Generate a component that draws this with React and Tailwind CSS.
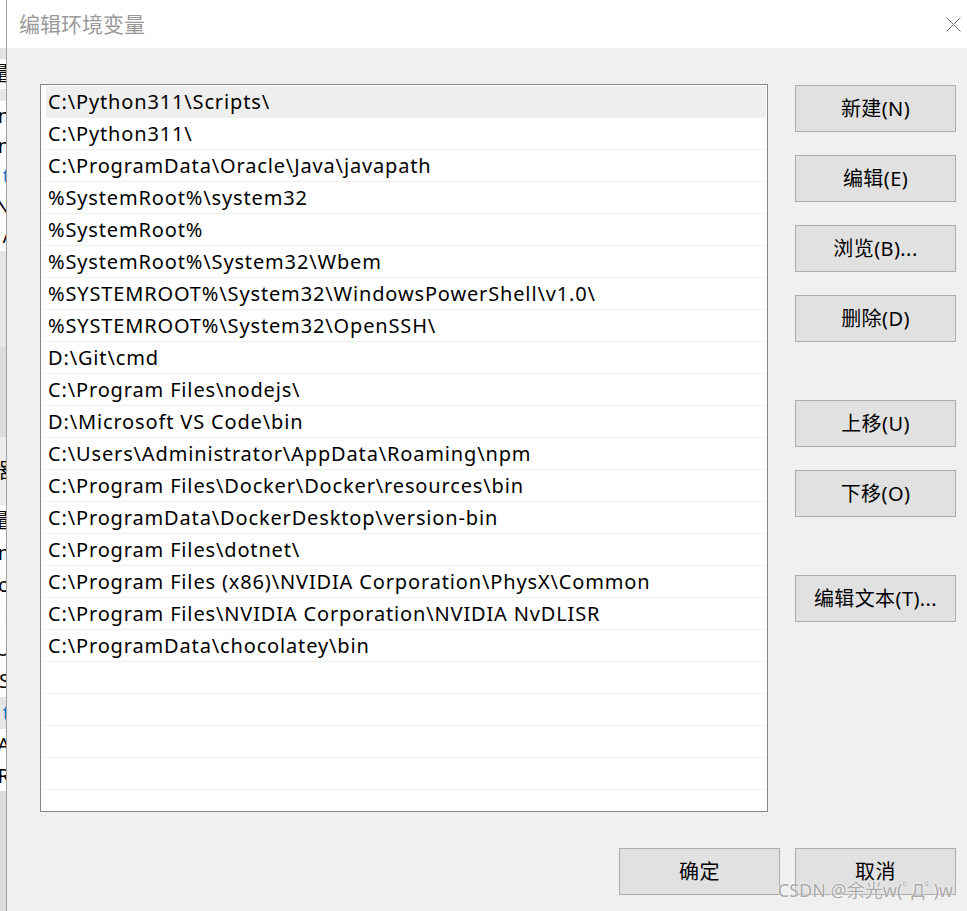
import React from "react";

const paths = [
  "C:\\Python311\\Scripts\\",
  "C:\\Python311\\",
  "C:\\ProgramData\\Oracle\\Java\\javapath",
  "%SystemRoot%\\system32",
  "%SystemRoot%",
  "%SystemRoot%\\System32\\Wbem",
  "%SYSTEMROOT%\\System32\\WindowsPowerShell\\v1.0\\",
  "%SYSTEMROOT%\\System32\\OpenSSH\\",
  "D:\\Git\\cmd",
  "C:\\Program Files\\nodejs\\",
  "D:\\Microsoft VS Code\\bin",
  "C:\\Users\\Administrator\\AppData\\Roaming\\npm",
  "C:\\Program Files\\Docker\\Docker\\resources\\bin",
  "C:\\ProgramData\\DockerDesktop\\version-bin",
  "C:\\Program Files\\dotnet\\",
  "C:\\Program Files (x86)\\NVIDIA Corporation\\PhysX\\Common",
  "C:\\Program Files\\NVIDIA Corporation\\NVIDIA NvDLISR",
  "C:\\ProgramData\\chocolatey\\bin",
];

const rows = [...paths, "", "", "", "", ""];

// sliver of the window that sits behind the dialog
const behind = [
  { h: "h-[48px]", bg: "bg-white", t: "i" },
  { h: "h-[11px]", bg: "bg-[#e3e3e3]", t: "" },
  { h: "h-[30px]", bg: "bg-white", t: "量" },
  { h: "h-[12px]", bg: "bg-[#e8e8e8]", t: "" },
  { h: "h-[30px]", bg: "bg-white", t: "n" },
  { h: "h-[30px]", bg: "bg-white", t: "n" },
  { h: "h-[30px]", bg: "bg-white", t: "t", blue: true },
  { h: "h-[30px]", bg: "bg-white", t: "N" },
  { h: "h-[30px]", bg: "bg-white", t: "/" },
  { h: "h-[96px]", bg: "bg-[#e6e6e6]", t: "" },
  { h: "h-[90px]", bg: "bg-[#dcdcdc]", t: "" },
  { h: "h-[68px]", bg: "bg-[#ececec]", t: "器" },
  { h: "h-[32px]", bg: "bg-white", t: "量" },
  { h: "h-[32px]", bg: "bg-white", t: "n" },
  { h: "h-[32px]", bg: "bg-white", t: "o" },
  { h: "h-[32px]", bg: "bg-white", t: "i" },
  { h: "h-[32px]", bg: "bg-white", t: "U" },
  { h: "h-[32px]", bg: "bg-white", t: "S" },
  { h: "h-[32px]", bg: "bg-[#e5e5e5]", t: "t", blue: true },
  { h: "h-[32px]", bg: "bg-white", t: "A" },
  { h: "h-[30px]", bg: "bg-white", t: "R" },
  { h: "flex-1", bg: "bg-[#dedede]", t: "" },
];

function Button({ children }) {
  return (
    <button className="h-[47px] w-[161px] shrink-0 border border-[#adadad] bg-[#e1e1e1] text-[20px] tracking-[0.4px] text-black">
      {children}
    </button>
  );
}

export default function App() {
  return (
    <div
      className="relative flex h-[911px] w-[967px] overflow-hidden bg-[#f0f0f0]"
      style={{ fontFamily: '"Noto Sans", "Noto Sans CJK SC", sans-serif' }}
    >
      {/* Window behind */}
      <div className="flex w-[6px] shrink-0 flex-col overflow-hidden">
        {behind.map((b, i) => (
          <div
            key={i}
            className={`${b.h} ${b.bg} flex items-center justify-end overflow-hidden text-[20px] leading-none ${
              b.blue ? "text-[#0078d7]" : "text-black"
            }`}
          >
            <span className="mr-[-4px]">{b.t}</span>
          </div>
        ))}
      </div>

      {/* Dialog */}
      <div className="flex flex-1 flex-col border-l border-[#a0a0a0]">
        {/* Title bar */}
        <div className="flex h-[48px] shrink-0 items-center justify-between bg-white pl-[12px] pr-[6px]">
          <span className="text-[21px] leading-none text-[#999999]">编辑环境变量</span>
          <svg width="15" height="15" viewBox="0 0 15 15">
            <path d="M0.5 0.5 L14.5 14.5 M14.5 0.5 L0.5 14.5" stroke="#707070" strokeWidth="1" fill="none" />
          </svg>
        </div>

        {/* Body */}
        <div className="flex flex-1 flex-col pl-[33px] pr-[11px] pt-[36px]">
          <div className="flex gap-[27px]">
            {/* List */}
            <div className="h-[728px] w-[728px] shrink-0 overflow-hidden border border-[#828790] bg-white pl-[2px] pr-[1px] pt-[1px]">
              {rows.map((r, i) => (
                <div
                  key={i}
                  className={`h-[32px] border-b border-[#f0f0f0] ${i === 0 ? "ml-[3px] border-[#efefef] bg-[#efefef] pl-[2px]" : "pl-[5px]"} flex items-center whitespace-nowrap text-[20px] leading-none tracking-[0.85px] text-black`}
                >
                  {r}
                </div>
              ))}
            </div>

            {/* Side buttons */}
            <div className="flex flex-col pt-[1px]">
              <div className="flex flex-col gap-[23px]">
                <Button>新建(N)</Button>
                <Button>编辑(E)</Button>
                <Button>浏览(B)...</Button>
                <Button>删除(D)</Button>
              </div>
              <div className="mt-[58px] flex flex-col gap-[23px]">
                <Button>上移(U)</Button>
                <Button>下移(O)</Button>
              </div>
              <div className="mt-[58px]">
                <Button>编辑文本(T)...</Button>
              </div>
            </div>
          </div>

          {/* Bottom buttons */}
          <div className="mt-[36px] flex justify-end gap-[15px]">
            <Button>确定</Button>
            <Button>取消</Button>
          </div>
        </div>
      </div>

      {/* Watermark */}
      <div
        className="absolute bottom-[12px] right-[14px] text-[18px] leading-none text-[#a8a8a8]"
        style={{ textShadow: "0 0 1px #ffffff, 0 0 2px #ffffff" }}
      >
        CSDN @余光w(ﾟДﾟ)w
      </div>
    </div>
  );
}
